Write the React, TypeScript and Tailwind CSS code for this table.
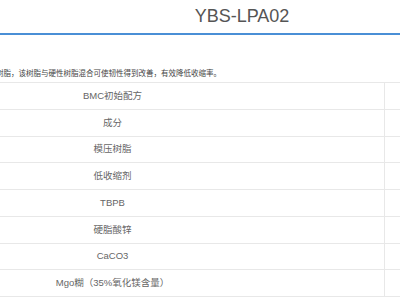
const rows = [
  "BMC初始配方",
  "成分",
  "模压树脂",
  "低收缩剂",
  "TBPB",
  "硬脂酸锌",
  "CaCO3",
  "Mgo糊（35%氧化镁含量）",
];

const App = () => {
  return (
    <div
      className="w-[400px] h-[300px] overflow-hidden bg-white text-[#555]"
      style={{ fontFamily: '"Liberation Sans", Arial, "Noto Sans CJK SC", sans-serif' }}
    >
      <div className="h-[33px] border-b-2 border-[#4a8fd6] box-content">
        <div className="w-[484px] pt-[5px] text-center text-[18px] leading-[22px] text-[#555]">
          YBS-LPA02
        </div>
      </div>

      <div className="mt-[34px] -ml-[4px] text-[7.5px] leading-[10px] text-[#444] whitespace-nowrap">
        树脂，该树脂与硬性树脂混合可使韧性得到改善，有效降低收缩率。
      </div>

      <div className="mt-[3px] border-t border-[#e8e8e8]">
        {rows.map((r) => (
          <div key={r} className="flex h-[26.75px] border-b border-[#e8e8e8]">
            <div className="w-[225px] flex items-center justify-center text-[9.5px] text-[#666] whitespace-nowrap">
              {r}
            </div>
            <div className="w-[160px] border-r border-[#e8e8e8]" />
            <div className="flex-1" />
          </div>
        ))}
      </div>
    </div>
  );
};

export default App;
